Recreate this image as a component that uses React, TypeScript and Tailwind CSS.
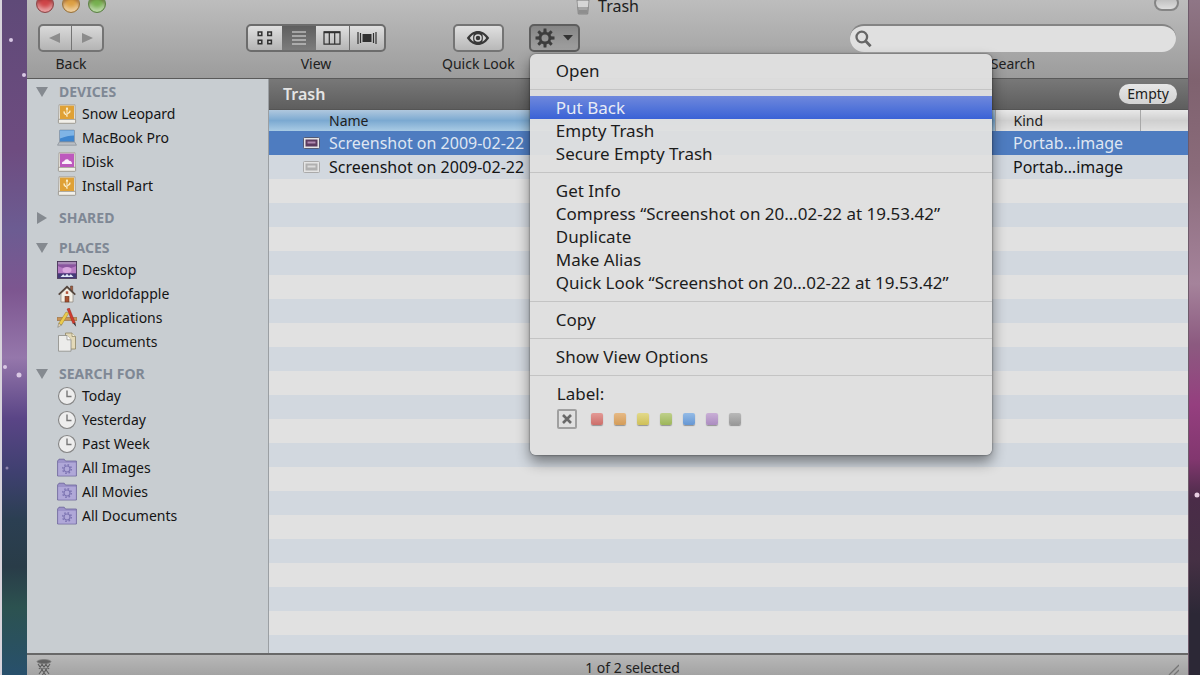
import React from "react";

const FONT = "font-['Noto_Sans','Open_Sans',sans-serif]";

type IconName = "disk" | "laptop" | "idisk" | "desktop" | "home" | "apps" | "docs" | "clock" | "smart";

const sections: { title: string; open: boolean; items: { label: string; icon: IconName }[] }[] = [
  {
    title: "DEVICES",
    open: true,
    items: [
      { label: "Snow Leopard", icon: "disk" },
      { label: "MacBook Pro", icon: "laptop" },
      { label: "iDisk", icon: "idisk" },
      { label: "Install Part", icon: "disk" },
    ],
  },
  { title: "SHARED", open: false, items: [] },
  {
    title: "PLACES",
    open: true,
    items: [
      { label: "Desktop", icon: "desktop" },
      { label: "worldofapple", icon: "home" },
      { label: "Applications", icon: "apps" },
      { label: "Documents", icon: "docs" },
    ],
  },
  {
    title: "SEARCH FOR",
    open: true,
    items: [
      { label: "Today", icon: "clock" },
      { label: "Yesterday", icon: "clock" },
      { label: "Past Week", icon: "clock" },
      { label: "All Images", icon: "smart" },
      { label: "All Movies", icon: "smart" },
      { label: "All Documents", icon: "smart" },
    ],
  },
];

const menuGroups = [
  ["Open"],
  ["Put Back", "Empty Trash", "Secure Empty Trash"],
  [
    "Get Info",
    "Compress “Screenshot on 20…02-22 at 19.53.42”",
    "Duplicate",
    "Make Alias",
    "Quick Look “Screenshot on 20…02-22 at 19.53.42”",
  ],
  ["Copy"],
  ["Show View Options"],
];

const labels = [
  { name: "Red", color: "from-[#e39a96] to-[#cc6e6a]" },
  { name: "Orange", color: "from-[#e6b985] to-[#d49c58]" },
  { name: "Yellow", color: "from-[#e2d98a] to-[#cfc057]" },
  { name: "Green", color: "from-[#bfd08a] to-[#9db659]" },
  { name: "Blue", color: "from-[#94bbe6] to-[#6697d3]" },
  { name: "Purple", color: "from-[#c9afd6] to-[#ab8cc0]" },
  { name: "Gray", color: "from-[#b9b9b9] to-[#989898]" },
];

const files = [
  { id: 1, name: "Screenshot on 2009-02-22", selected: true },
  { id: 2, name: "Screenshot on 2009-02-22", selected: false },
];
const emptyRows = Array.from({ length: 40 }, (_, i) => i);

function SidebarIcon({ name }: { name: IconName }) {
  return (
    <svg width="20" height="20" viewBox="0 0 20 20" className="shrink-0" aria-hidden>
      {(name === "disk" || name === "idisk") && (
        <>
          <path d="M2 .8h16l.5 15H1.500z" fill="#e9e5dc" stroke="#9a948a" strokeWidth=".7" />
          <rect x="1.400" y="15.300" width="17.200" height="4" rx=".8" fill="#f1efe9" stroke="#8f8a80" strokeWidth=".8" />
          <rect x="3" y="1.600" width="14" height="13.400" fill={name === "disk" ? "#dfa136" : "#bd59bd"} />
          {name === "disk" ? (
            <path d="M10 13V5M10 11.500L7 9.500V7.300M10 10l3-1.600V6.500M9.200 5.200l.8-1.600.8 1.600z" fill="#fbeecb" stroke="#fbeecb" strokeWidth="1" />
          ) : (
            <path d="M5 12c-.4-2 1-2.900 2.200-2.800C7.600 6.800 11.400 6.500 12 8.700c1.800-.3 3.200 1.400 3 3.300z" fill="#fbeffb" />
          )}
        </>
      )}
      {name === "laptop" && (
        <>
          <rect x="2.500" y="2" width="15" height="12" rx=".8" fill="#3f86cf" stroke="#8d99a6" strokeWidth=".8" />
          <path d="M3 2.500h14v5c-5 0-8.500 1-14 3z" fill="#7fb4e6" />
          <path d="M2.300 14h15.400l1.800 3.200H.5z" fill="#b9bec4" stroke="#7e858d" strokeWidth=".6" />
        </>
      )}
      {name === "desktop" && (
        <>
          <rect x=".4" y="1.400" width="19.200" height="17" fill="#8a559f" stroke="#40304f" strokeWidth=".8" />
          <path d="M1 6c5 3 13 3 18 0v7H1z" fill="#b77cc4" />
          <ellipse cx="10" cy="10" rx="4.500" ry="3" fill="#d9a6df" />
          <rect x="1" y="2" width="18" height="2.300" fill="#a98bb8" />
          <rect x="1" y="13.500" width="18" height="4.500" fill="#443a78" />
          <path d="M3.500 17l2.700-2.800L8 16l2-2.300 2 2.300 1.800-1.800L16.500 17z" fill="#dfe6f5" />
        </>
      )}
      {name === "home" && (
        <>
          <path d="M13.500 2h2.200v6l-2.200-2z" fill="#a35a3c" stroke="#4d3a31" strokeWidth=".5" />
          <path d="M4 9.500L10 4l6 5.500V18H4z" fill="#f2eee4" stroke="#7d7468" strokeWidth=".6" />
          <path d="M1.700 10.600L10 2.600l8.300 8" fill="none" stroke="#54453c" strokeWidth="1.600" />
          <rect x="8" y="12.300" width="4" height="5.700" fill="#a8512f" stroke="#5e2f1d" strokeWidth=".5" />
          <rect x="8.800" y="7.300" width="2.400" height="2.600" fill="#b4553c" />
        </>
      )}
      {name === "apps" && (
        <>
          <path d="M0 9.500h20v3H0z" fill="#c99356" stroke="#8b5e2d" strokeWidth=".5" />
          <path d="M10 1l2.400-1 5.900 14.800-2.400.9z" fill="#cf3c2f" stroke="#8a241c" strokeWidth=".4" />
          <path d="M16.200 15.600l2.100-.8.900 3.900z" fill="#3c3030" />
          <path d="M9 4l2.700 1.300L4.500 17l-2.800-1.500z" fill="#ebcb4e" stroke="#9c7d22" strokeWidth=".5" />
          <path d="M1.700 15.500L4.500 17 .8 19.300z" fill="#f3dfc0" stroke="#554" strokeWidth=".4" />
        </>
      )}
      {name === "docs" && (
        <>
          <path d="M8.500 1H15L18.500 4.500v12.500h-10z" fill="#e3d9b8" stroke="#8d8463" strokeWidth=".8" />
          <path d="M15 1v3.500h3.500" fill="#f5efd9" stroke="#8d8463" strokeWidth=".7" />
          <path d="M1.500 3.500h8.500l4 4.300v11.400H1.500z" fill="#ececea" stroke="#8b8b87" strokeWidth=".8" />
          <path d="M10 3.500v4.300h4" fill="#fff" stroke="#8b8b87" strokeWidth=".7" />
        </>
      )}
      {name === "clock" && (
        <>
          <circle cx="10" cy="10" r="8.500" fill="#ededed" stroke="#858585" strokeWidth="1.100" />
          <path d="M10 4.500V10.500h4.500" fill="none" stroke="#777" strokeWidth="1.400" />
        </>
      )}
      {name === "smart" && (
        <>
          <path d="M.6 18V3L2 1.200h5.200L8.500 3h10.900v15z" fill="#9c93c9" stroke="#6a6299" strokeWidth=".8" />
          <path d="M1.200 5h17.600v12.500H1.200z" fill="#b0a8d8" />
          <circle cx="10" cy="11" r="3" fill="none" stroke="#7d75b2" strokeWidth="1.200" />
          <circle cx="10" cy="11" r="4.300" fill="none" stroke="#7d75b2" strokeWidth="1.500" strokeDasharray="1.600 1.780" />
        </>
      )}
    </svg>
  );
}

function Gear() {
  return (
    <svg width="20" height="20" viewBox="0 0 20 20" aria-hidden>
      <circle cx="10" cy="10" r="4.900" fill="none" stroke="#3d3d3d" strokeWidth="2.800" />
      {[0, 45, 90, 135, 180, 225, 270, 315].map((a) => (
        <path key={a} d="M8.600 .5h2.800l.3 4H8.300z" fill="#3d3d3d" transform={`rotate(${a} 10 10)`} />
      ))}
    </svg>
  );
}

function TrafficLight({ label, className }: { label: string; className: string }) {
  return (
    <button
      aria-label={label}
      className={`size-[18px] rounded-full border shadow-[inset_0_3px_3px_rgba(60,0,0,0.35),inset_0_-4px_4px_rgba(255,255,255,0.5)] ${className}`}
    />
  );
}

function Toolbar() {
  const seg = "flex h-full items-center justify-center";
  return (
    <div className="flex items-start pr-3 pl-[11px] text-sm leading-5">
      <div className="flex flex-col items-center gap-[2px]">
        <div className="flex h-7 w-[66px] overflow-hidden rounded-[5px] border-2 border-[#747474] bg-linear-to-b from-[#dadada] to-[#b4b4b4]">
          <button aria-label="Back" className={`${seg} flex-1 border-r border-[#747474]`}>
            <svg width="12" height="12" viewBox="0 0 12 12"><path d="M11 1v10L0 6z" fill="#8c8c8c" /></svg>
          </button>
          <button aria-label="Forward" className={`${seg} flex-1`}>
            <svg width="12" height="12" viewBox="0 0 12 12"><path d="M1 1v10l11-5z" fill="#8c8c8c" /></svg>
          </button>
        </div>
        <span>Back</span>
      </div>

      <div className="ml-[142px] flex flex-col items-center gap-[2px]">
        <div className="flex h-7 w-[140px] overflow-hidden rounded-[5px] border-2 border-[#6c6c6c] bg-linear-to-b from-[#e0e0e0] to-[#b4b4b4]">
          <button aria-label="Icon view" className={`${seg} flex-1`}>
            <svg width="16" height="14" viewBox="0 0 16 14" fill="none" stroke="#303030" strokeWidth="1.500">
              <path d="M1.200 1h3.600v3.600H1.200zM10.800 1h3.600v3.600h-3.600zM1.200 9.200h3.600v3.600H1.200zM10.800 9.200h3.600v3.600h-3.600z" />
            </svg>
          </button>
          <button aria-label="List view" aria-pressed="true" className={`${seg} flex-1 bg-linear-to-b from-[#5f5f5f] to-[#7c7c7c]`}>
            <svg width="16" height="14" viewBox="0 0 16 14" stroke="#e4e4e4" strokeWidth="1.200">
              <path d="M1 1h14M1 5h14M1 9h14M1 13h14" />
            </svg>
          </button>
          <button aria-label="Column view" className={`${seg} flex-1 border-r border-[#6c6c6c]`}>
            <svg width="18" height="14" viewBox="0 0 18 14" fill="none" stroke="#303030" strokeWidth="1.200">
              <path d="M1 .8h16v12.400H1z" />
              <path d="M1 1.400h16" strokeWidth="1.800" />
              <path d="M6.300 1v12M11.700 1v12" />
            </svg>
          </button>
          <button aria-label="Cover Flow" className={`${seg} flex-1`}>
            <svg width="20" height="14" viewBox="0 0 20 14" stroke="#303030" strokeWidth="1.200">
              <path d="M1 1v12M3.500 2v10M16.500 2v10M19 1v12" />
              <path d="M5.500 3v8h9V3z" fill="#303030" stroke="none" />
            </svg>
          </button>
        </div>
        <span>View</span>
      </div>

      <div className="ml-14 flex flex-col items-center gap-[2px]">
        <button aria-label="Quick Look" className="flex h-7 w-[51px] items-center justify-center rounded-[5px] border-2 border-[#747474] bg-linear-to-b from-[#e0e0e0] to-[#b8b8b8]">
          <svg width="24" height="16" viewBox="0 0 24 16">
            <path d="M.8 8C5 2 9 1 12 1s7 1 11.200 7C19 14 15 15 12 15S5 14 .8 8z" fill="#383838" />
            <path d="M3.800 8C5.500 5.600 6.600 4.800 7.700 4.200 6.900 6.500 6.900 9.500 7.700 11.800 6.600 11.200 5.500 10.400 3.800 8zM20.200 8c-1.700-2.400-2.800-3.200-3.900-3.800.8 2.300.8 5.300 0 7.600 1.100-.6 2.200-1.400 3.900-3.800z" fill="#d4d4d4" />
            <circle cx="12" cy="8" r="3" fill="none" stroke="#d8d8d8" strokeWidth="1.500" />
          </svg>
        </button>
        <span>Quick Look</span>
      </div>

      <div className="relative ml-[14px]">
        <button
          aria-label="Action"
          aria-expanded="true"
          className="flex h-7 w-[51px] items-center justify-center gap-2 rounded-[5px] border-2 border-[#5e5e5e] bg-linear-to-b from-[#868686] to-[#a0a0a0]"
        >
          <Gear />
          <svg width="10" height="6" viewBox="0 0 10 6"><path d="M0 0h10L5 5.500z" fill="#333" /></svg>
        </button>
        <ActionMenu />
      </div>

      <div className="ml-auto flex w-[326px] flex-col items-center gap-[2px]">
        <div className="flex h-7 w-full items-center rounded-full border-t-2 border-[#848484] bg-[#e0e0e0] pl-[5px]">
          <svg width="17" height="18" viewBox="0 0 17 18" fill="none" stroke="#666">
            <circle cx="6.800" cy="7" r="5.300" strokeWidth="2.300" />
            <path d="M10.600 11l5 5.200" strokeWidth="2.800" />
          </svg>
          <input id="search" type="text" className="h-full min-w-0 flex-1 bg-transparent px-2 outline-none" />
        </div>
        <label htmlFor="search">Search</label>
      </div>
    </div>
  );
}

function ActionMenu() {
  return (
    <div
      role="menu"
      className="absolute top-[30px] left-px z-20 w-[462px] rounded-md bg-[#e0e0e0]/97 pt-[5px] pb-[26px] text-[17px] leading-[23px] text-[#1c1c1c] shadow-[0_0_2px_rgba(0,0,0,0.6),0_7px_14px_rgba(0,0,0,0.45)]"
    >
      {menuGroups.map((group, i) => (
        <div key={i}>
          {group.map((item) => (
            <button
              key={item}
              role="menuitem"
              className={`block w-full pl-[26px] text-left whitespace-nowrap ${
                item === "Put Back" ? "bg-linear-to-b from-[#6f88dc] to-[#3a62d6] text-[#e8ebf5]" : ""
              }`}
            >
              {item}
            </button>
          ))}
          <div className="flex h-[14px] items-center">
            <div className="h-px w-full bg-[#c4c4c4]" />
          </div>
        </div>
      ))}
      <div className="pl-[27px]">
        <div>Label:</div>
        <div className="flex items-center gap-[11px] pt-1">
          <button aria-label="None" className="mr-[3px] flex size-5 items-center justify-center rounded-xs border-2 border-[#a0a0a0]">
            <svg width="10" height="10" viewBox="0 0 10 10"><path d="M1 1l8 8M9 1L1 9" stroke="#6a6a6a" strokeWidth="2.600" /></svg>
          </button>
          {labels.map((l) => (
            <button
              key={l.name}
              aria-label={l.name}
              className={`size-3 rounded-[2px] bg-linear-to-b shadow-[0_1px_1px_rgba(0,0,0,0.35)] ${l.color}`}
            />
          ))}
        </div>
      </div>
    </div>
  );
}

function Sidebar() {
  return (
    <nav className="flex w-[242px] shrink-0 flex-col gap-[10px] border-r border-[#9b9fa3] bg-[#c8cdd1] pt-[3px] text-sm">
      {sections.map((s) => (
        <div key={s.title}>
          <h2 className="flex h-5 items-center gap-[11px] pl-[9px] font-bold text-[#7f8895]">
            <svg width="12" height="12" viewBox="0 0 12 12" aria-hidden>
              <path d={s.open ? "M0 1h12L6 11z" : "M1 0v12l10-6z"} fill="#858a90" />
            </svg>
            {s.title}
          </h2>
          {s.items.map((item) => (
            <a key={item.label} href="#" className="flex h-6 items-center gap-[5px] pl-[30px] text-[#141414]">
              <SidebarIcon name={item.icon} />
              {item.label}
            </a>
          ))}
        </div>
      ))}
    </nav>
  );
}

function FileList() {
  return (
    <div className="min-h-0 flex-1 overflow-hidden">
      <table className="w-full table-fixed border-collapse text-base">
        <thead>
          <tr className="h-[21px] text-left text-sm leading-5">
            <th className="border-r border-[#a8a8a8] bg-linear-to-b from-[#b0c8de] via-[#7ba9d1] to-[#a9cbe4] p-0 pl-[60px] font-normal">Name</th>
            <th className="w-[145px] border-r border-[#a8a8a8] bg-linear-to-b from-[#e8e8e8] via-[#cfcfcf] to-[#e0e0e0] p-0 pl-[18px] font-normal">Kind</th>
            <td className="w-12 bg-linear-to-b from-[#e8e8e8] via-[#cfcfcf] to-[#e0e0e0] p-0" />
          </tr>
        </thead>
        <tbody>
          {files.map((f) => (
            <tr key={f.id} className={`h-6 ${f.selected ? "bg-[#4e7cc0] text-[#dfe6f2]" : "bg-[#d2d8df] text-[#141414]"}`}>
              <td className="p-0 pl-[34px] leading-5">
                <div className="flex items-center gap-[9px] whitespace-nowrap">
                  <svg width="17" height="12" viewBox="0 0 17 12" className="shrink-0" aria-hidden>
                    <rect x=".5" y=".5" width="16" height="11" rx="1" fill="#e4e4e4" stroke={f.selected ? "#545b75" : "#aaa"} />
                    <rect x="2.500" y="2.500" width="12" height="7" fill={f.selected ? "#5b3b5f" : "#b0b0b0"} />
                    <rect x="4.500" y="4.500" width="8" height="2" fill={f.selected ? "#b08ab0" : "#dcdcdc"} />
                  </svg>
                  {f.name}
                </div>
              </td>
              <td className="p-0 pl-[18px] leading-5">Portab…image</td>
              <td className="p-0" />
            </tr>
          ))}
          {emptyRows.map((r) => (
            <tr key={r} className="h-6 bg-[#e1e1e1] even:bg-[#d2d8df]">
              <td colSpan={3} className="p-0" />
            </tr>
          ))}
        </tbody>
      </table>
    </div>
  );
}

export default function App() {
  return (
    <div className={`flex h-screen overflow-hidden border-l-2 border-[#d8d4dc] text-[#202020] ${FONT}`}>
      <div className="w-[25px] shrink-0 bg-[linear-gradient(to_bottom,#5f4a78,#6e4c80_22%,#6c5c92_34%,#7d5690_43%,#9577ab_53%,#5a4586_62%,#3f4070_70%,#2b3f52_77%,#293c48_84%,#2c5250_90%,#28506c)]">
        <svg width="25" height="675" viewBox="0 0 25 675" fill="#d9c8e4" aria-hidden>
          <circle cx="9" cy="40" r="2" />
          <circle cx="22" cy="75" r="2" />
          <circle cx="3" cy="367" r="2" />
          <circle cx="17" cy="375" r="2.500" />
          <circle cx="5" cy="468" r="1.500" opacity=".5" />
        </svg>
      </div>
      <div className="flex min-w-0 flex-1 flex-col">
        <header className="flex h-[79px] shrink-0 flex-col border-b border-[#5a5a5a] bg-linear-to-b from-[#bdbdbd] to-[#9c9c9c]">
          <div className="flex h-6 shrink-0 items-start justify-between pr-[9px] pl-[9px]">
            <div className="-mt-[5px] flex flex-1 gap-2">
              <TrafficLight label="Close" className="border-[#8c4a4c] bg-[#cf4548]" />
              <TrafficLight label="Minimize" className="border-[#97733f] bg-[#dda044]" />
              <TrafficLight label="Zoom" className="border-[#5d8148] bg-[#76b04f]" />
            </div>
            <h1 className="flex h-3 items-center gap-2 text-base leading-3">
              <svg width="14" height="18" viewBox="0 0 14 18" aria-hidden>
                <path d="M1 2h12l-1.300 15H2.300z" fill="#a6a6a6" stroke="#858585" />
                <path d="M1.500 4h11l-.4 6H1.900z" fill="#d6d6d6" />
                <path d="M2.500 13h9l-.3 3.500H2.800z" fill="#8e8e8e" />
              </svg>
              Trash
            </h1>
            <div className="-mt-[5px] flex flex-1 justify-end">
              <button aria-label="Toggle toolbar" className="h-4 w-[25px] rounded-full border-2 border-[#858585] bg-linear-to-b from-[#b8b8b8] to-[#dedede]" />
            </div>
          </div>
          <Toolbar />
        </header>

        <div className="flex min-h-0 flex-1">
          <Sidebar />
          <main className="flex min-w-0 flex-1 flex-col">
            <div className="flex h-[31px] shrink-0 items-center justify-between border-b border-[#555] bg-linear-to-b from-[#787878] to-[#5e5e5e] pr-[11px] pl-[14px]">
              <h2 className="font-semibold text-[#e4e4e4]">Trash</h2>
              <button className="h-5 rounded-full bg-linear-to-b from-[#e6e6e6] to-[#d2d2d2] px-2 text-sm leading-5">Empty</button>
            </div>
            <FileList />
          </main>
        </div>

        <footer className="flex h-[22px] shrink-0 items-start justify-between border-t-2 border-[#686868] bg-linear-to-b from-[#b8b8b8] to-[#a3a3a3] px-[9px] text-sm leading-[26px]">
          <svg width="16" height="18" viewBox="0 0 16 18" className="mt-1" aria-hidden>
            <path d="M2 3l2 15h8l2-15z" fill="#a8a8a8" />
            <path d="M2 5l9 13M5 4l8 11M9 4l4 6M14 5L5 18M11 4L3 15M7 4L3 10" stroke="#5c5c5c" strokeWidth="1.100" />
            <ellipse cx="8" cy="2.600" rx="7" ry="2" fill="#616161" stroke="#7d7d7d" strokeWidth=".8" />
          </svg>
          <span className="pl-12">1 of 2 selected</span>
          <svg width="14" height="20" viewBox="0 0 14 20" aria-hidden>
            <path d="M4 20L14 10M9 20l5-5" stroke="#757575" strokeWidth="1.300" />
          </svg>
        </footer>
      </div>
      <div className="w-3 shrink-0 border-l border-[#6e5a6a] bg-[linear-gradient(to_bottom,#8f7686,#7f626f_12%,#8a6b7a_25%,#a5839b_42%,#8c5a80_51%,#953f7f_60%,#82376f_68%,#4a2c48_74%,#453044_83%,#2c2836_91%)]">
        <svg width="11" height="675" viewBox="0 0 11 675" fill="#e8cfe2" aria-hidden>
          <circle cx="8" cy="495" r="2.500" />
        </svg>
      </div>
    </div>
  );
}
